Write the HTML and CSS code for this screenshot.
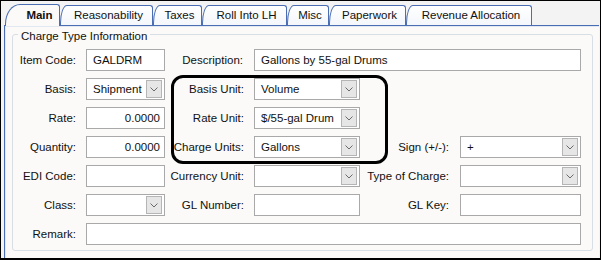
FILE: index.html
```html
<!DOCTYPE html>
<html>

<head>
    <link rel="stylesheet" href="styles.css">
</head>

<body>
    <div class="frame">
        <div class="tabs">
            <div class="tab active" style="width: 55px;">Main</div>
            <div class="tab" style="width: 93px;">Reasonability</div>
            <div class="tab" style="width: 49px;">Taxes</div>
            <div class="tab" style="width: 85px;">Roll Into LH</div>
            <div class="tab" style="width: 42px;">Misc</div>
            <div class="tab" style="width: 77px;">Paperwork</div>
            <div class="tab" style="width: 126px;">Revenue Allocation</div>
        </div>
        <div class="panel">
            <div class="group">
                <div class="group-title">Charge Type Information</div>
                <div class="form">
                    <!-- row 1 -->
                    <div class="label">Item Code:</div>
                    <div class="field">GALDRM</div>
                    <div class="label">Description:</div>
                    <div class="field wide-3">Gallons by 55-gal Drums</div>

                    <!-- row 2 -->
                    <div class="label">Basis:</div>
                    <div class="field select">Shipment<span class="drop"><svg width="8" height="5" viewBox="0 0 8 5"><path d="M0.5 0.5 L4 4 L7.5 0.5" fill="none" stroke="#6a6a6a" stroke-width="1"/></svg></span></div>
                    <div class="label">Basis Unit:</div>
                    <div class="field select">Volume<span class="drop"><svg width="8" height="5" viewBox="0 0 8 5"><path d="M0.5 0.5 L4 4 L7.5 0.5" fill="none" stroke="#6a6a6a" stroke-width="1"/></svg></span></div>
                    <div class="empty"></div>
                    <div class="empty"></div>

                    <!-- row 3 -->
                    <div class="label">Rate:</div>
                    <div class="field number">0.0000</div>
                    <div class="label">Rate Unit:</div>
                    <div class="field select">$/55-gal Drum<span class="drop"><svg width="8" height="5" viewBox="0 0 8 5"><path d="M0.5 0.5 L4 4 L7.5 0.5" fill="none" stroke="#6a6a6a" stroke-width="1"/></svg></span></div>
                    <div class="empty"></div>
                    <div class="empty"></div>

                    <!-- row 4 -->
                    <div class="label">Quantity:</div>
                    <div class="field number">0.0000</div>
                    <div class="label">Charge Units:</div>
                    <div class="field select">Gallons<span class="drop"><svg width="8" height="5" viewBox="0 0 8 5"><path d="M0.5 0.5 L4 4 L7.5 0.5" fill="none" stroke="#6a6a6a" stroke-width="1"/></svg></span></div>
                    <div class="label">Sign (+/-):</div>
                    <div class="field select">+<span class="drop"><svg width="8" height="5" viewBox="0 0 8 5"><path d="M0.5 0.5 L4 4 L7.5 0.5" fill="none" stroke="#6a6a6a" stroke-width="1"/></svg></span></div>

                    <!-- row 5 -->
                    <div class="label">EDI Code:</div>
                    <div class="field"></div>
                    <div class="label">Currency Unit:</div>
                    <div class="field select"><span class="drop"><svg width="8" height="5" viewBox="0 0 8 5"><path d="M0.5 0.5 L4 4 L7.5 0.5" fill="none" stroke="#6a6a6a" stroke-width="1"/></svg></span></div>
                    <div class="label">Type of Charge:</div>
                    <div class="field select"><span class="drop"><svg width="8" height="5" viewBox="0 0 8 5"><path d="M0.5 0.5 L4 4 L7.5 0.5" fill="none" stroke="#6a6a6a" stroke-width="1"/></svg></span></div>

                    <!-- row 6 -->
                    <div class="label">Class:</div>
                    <div class="field select"><span class="drop"><svg width="8" height="5" viewBox="0 0 8 5"><path d="M0.5 0.5 L4 4 L7.5 0.5" fill="none" stroke="#6a6a6a" stroke-width="1"/></svg></span></div>
                    <div class="label">GL Number:</div>
                    <div class="field"></div>
                    <div class="label">GL Key:</div>
                    <div class="field"></div>

                    <!-- row 7 -->
                    <div class="label">Remark:</div>
                    <div class="field wide-5"></div>
                </div>
                <!-- callout around the unit fields -->
                <div class="callout"></div>
            </div>
        </div>
    </div>
</body>

</html>
```

FILE: styles.css
```css
body {
    font-family: "Liberation Sans", Arial, sans-serif;
    font-size: 11.5px;
    color: #111;
    margin: 0;
    background: #fff;
}

.frame {
    width: 601px;
    height: 260px;
    box-sizing: border-box;
    border: 1px solid #000;
    border-bottom-width: 2px;
    background: #f3f3f3;
    padding: 3px 1px 0 3px;
    overflow: hidden;
    display: flex;
    flex-direction: column;
}

.tabs {
    display: flex;
    align-items: flex-end;
    height: 21px;
    padding-left: 1px;
    position: relative;
    z-index: 1;
}

.tab {
    height: 20px;
    box-sizing: border-box;
    border: 1px solid #4a6db3;
    border-bottom: none;
    border-top-left-radius: 7px 18px;
    border-top-right-radius: 3px;
    background: linear-gradient(#ffffff, #f3f6fb);
    text-align: center;
    line-height: 19px;
    padding-left: 4px;
    white-space: nowrap;
}

.tab.active {
    height: 22px;
    margin-bottom: -1px;
    border-top-left-radius: 15px 20px;
    background: #fbfaf8;
    font-weight: bold;
    padding-left: 14px;
    line-height: 21px;
}

.panel {
    flex: 1;
    border-top: 1px solid #4a6db3;
    border-left: 1px solid #4a6db3;
    background: #fbfaf8;
    padding: 8px 6px 0 7px;
    box-shadow: inset 1px 1px 0 #e2e8f2;
}

.group {
    position: relative;
    border: 1px solid #d7dee6;
    border-radius: 3px;
    padding: 0 11px 5px 0;
}

.group-title {
    width: fit-content;
    margin: -6px 0 0 5px;
    padding: 0 3px;
    line-height: 14px;
    background: #fbfaf8;
}

.form {
    display: grid;
    grid-template-columns: 73px 79px 89px 106px 100px 121px;
    grid-auto-rows: 22px;
    row-gap: 7px;
    margin-top: 6px;
}

.label {
    text-align: right;
    padding-right: 10px;
    line-height: 22px;
    white-space: nowrap;
}

.label:nth-child(6n+3) {
    padding-right: 11px;
}

.field {
    position: relative;
    border: 1px solid #a9a9a9;
    background: #fff;
    box-sizing: border-box;
    line-height: 20px;
    padding-left: 6px;
    white-space: nowrap;
}

.field.number {
    text-align: right;
    padding-right: 4px;
}

.field.wide-3 {
    grid-column: span 3;
}

.field.wide-5 {
    grid-column: span 5;
}

.drop {
    position: absolute;
    top: 1px;
    right: 2px;
    width: 16px;
    height: 18px;
    box-sizing: border-box;
    border: 1px solid #b5b5b5;
    background: #e6e6e6;
    display: flex;
    align-items: center;
    justify-content: center;
}

.callout {
    position: absolute;
    left: 158px;
    top: 40px;
    width: 217px;
    height: 89px;
    box-sizing: border-box;
    border: 3px solid #000;
    border-radius: 12px;
    pointer-events: none;
}
```
